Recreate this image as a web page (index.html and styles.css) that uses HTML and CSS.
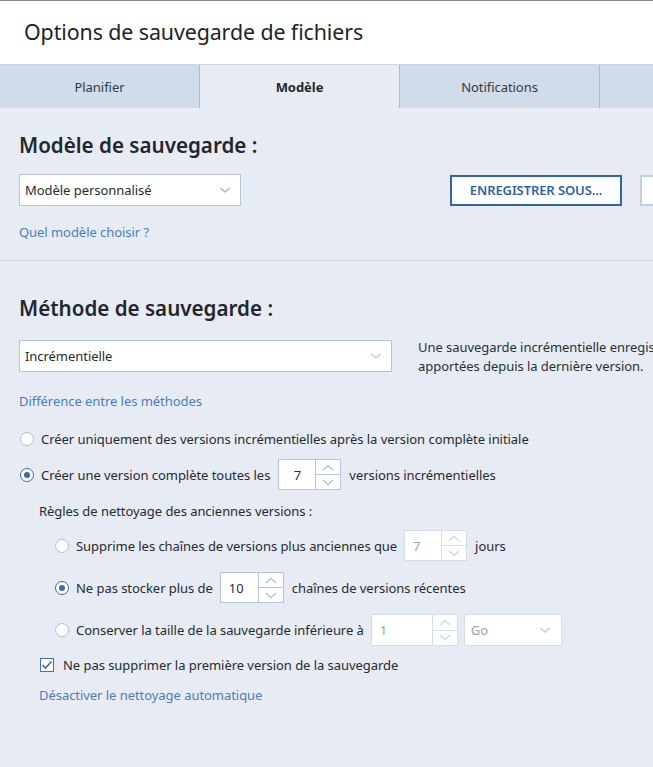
FILE: index.html
```html
<!DOCTYPE html>
<html lang="fr">
<head>
<meta charset="utf-8">
<title>Options de sauvegarde de fichiers</title>
<link rel="stylesheet" href="styles.css">
</head>
<body>
<div class="page">
  <header class="header">
    <h1 class="title">Options de sauvegarde de fichiers</h1>
  </header>
  <nav class="tabs">
    <div class="tab">Planifier</div>
    <div class="tab active">Modèle</div>
    <div class="tab">Notifications</div>
    <div class="tab"></div>
  </nav>
  <main class="content">
    <section class="sec sec-model">
      <h2 class="heading">Modèle de sauvegarde :</h2>
      <div class="row model-row">
        <div class="select select-model">
          <span>Modèle personnalisé</span>
          <svg class="chev" width="12" height="8" viewBox="0 0 12 8"><polyline points="1.5,2 6,6 10.5,2" fill="none" stroke="#aab6c6" stroke-width="1.4"/></svg>
        </div>
        <button class="btn btn-primary">ENREGISTRER SOUS...</button>
        <button class="btn btn-ghost"></button>
      </div>
      <a class="link link-model">Quel modèle choisir ?</a>
    </section>
    <div class="divider"></div>
    <section class="sec sec-method">
      <h2 class="heading heading-method">Méthode de sauvegarde :</h2>
      <div class="row method-row">
        <div class="select select-method">
          <span>Incrémentielle</span>
          <svg class="chev" width="12" height="8" viewBox="0 0 12 8"><polyline points="1.5,2 6,6 10.5,2" fill="none" stroke="#c3ccd8" stroke-width="1.3"/></svg>
        </div>
        <p class="desc"><span class="desc-line">Une sauvegarde incrémentielle enregistre uniquement les modifications</span><span class="desc-line">apportées depuis la dernière version.</span></p>
      </div>
      <a class="link link-diff">Différence entre les méthodes</a>

      <label class="opt opt-1">
        <span class="radio"></span>
        <span>Créer uniquement des versions incrémentielles après la version complète initiale</span>
      </label>
      <div class="opt opt-2">
        <span class="radio checked"></span>
        <span>Créer une version complète toutes les</span>
        <div class="spin spin-a">
          <span class="spin-val center">7</span>
          <span class="spin-arrows">
            <span class="arr"><svg width="12" height="7" viewBox="0 0 12 7"><polyline points="1,6 6,1.5 11,6" fill="none" stroke="#b9c3d1" stroke-width="1.4"/></svg></span>
            <span class="arr"><svg width="12" height="7" viewBox="0 0 12 7"><polyline points="1,1 6,5.5 11,1" fill="none" stroke="#b9c3d1" stroke-width="1.4"/></svg></span>
          </span>
        </div>
        <span>versions incrémentielles</span>
      </div>

      <div class="rules">
        <p class="rules-title">Règles de nettoyage des anciennes versions :</p>
        <div class="opt sub sub-1">
          <span class="radio"></span>
          <span>Supprime les chaînes de versions plus anciennes que</span>
          <div class="spin spin-b disabled">
            <span class="spin-val">7</span>
            <span class="spin-arrows">
              <span class="arr"><svg width="12" height="7" viewBox="0 0 12 7"><polyline points="1,6 6,1.5 11,6" fill="none" stroke="#d2d8e1" stroke-width="1.4"/></svg></span>
              <span class="arr"><svg width="12" height="7" viewBox="0 0 12 7"><polyline points="1,1 6,5.5 11,1" fill="none" stroke="#d2d8e1" stroke-width="1.4"/></svg></span>
            </span>
          </div>
          <span>jours</span>
        </div>
        <div class="opt sub sub-2">
          <span class="radio checked"></span>
          <span>Ne pas stocker plus de</span>
          <div class="spin spin-c">
            <span class="spin-val">10</span>
            <span class="spin-arrows">
              <span class="arr"><svg width="12" height="7" viewBox="0 0 12 7"><polyline points="1,6 6,1.5 11,6" fill="none" stroke="#b9c3d1" stroke-width="1.4"/></svg></span>
              <span class="arr"><svg width="12" height="7" viewBox="0 0 12 7"><polyline points="1,1 6,5.5 11,1" fill="none" stroke="#b9c3d1" stroke-width="1.4"/></svg></span>
            </span>
          </div>
          <span>chaînes de versions récentes</span>
        </div>
        <div class="opt sub sub-3">
          <span class="radio"></span>
          <span>Conserver la taille de la sauvegarde inférieure à</span>
          <div class="spin spin-d disabled">
            <span class="spin-val">1</span>
            <span class="spin-arrows">
              <span class="arr"><svg width="12" height="7" viewBox="0 0 12 7"><polyline points="1,6 6,1.5 11,6" fill="none" stroke="#d2d8e1" stroke-width="1.4"/></svg></span>
              <span class="arr"><svg width="12" height="7" viewBox="0 0 12 7"><polyline points="1,1 6,5.5 11,1" fill="none" stroke="#d2d8e1" stroke-width="1.4"/></svg></span>
            </span>
          </div>
          <div class="select select-unit disabled">
            <span>Go</span>
            <svg class="chev" width="12" height="8" viewBox="0 0 12 8"><polyline points="1.5,2 6,6 10.5,2" fill="none" stroke="#c3ccd8" stroke-width="1.4"/></svg>
          </div>
        </div>
        <div class="opt check-row">
          <span class="checkbox"><svg width="12" height="10" viewBox="0 0 12 10"><polyline points="1.5,5 4.5,8 10.5,1.5" fill="none" stroke="#3c6aac" stroke-width="1.6"/></svg></span>
          <span>Ne pas supprimer la première version de la sauvegarde</span>
        </div>
        <a class="link link-disable">Désactiver le nettoyage automatique</a>
      </div>
    </section>
  </main>
</div>
</body>
</html>
```
FILE: styles.css
```css
* { box-sizing: border-box; }
html, body { margin: 0; padding: 0; }
body {
  width: 653px;
  height: 767px;
  overflow: hidden;
  font-family: "Noto Sans", "Open Sans", sans-serif;
  font-size: 13px;
  letter-spacing: -0.05px;
  color: #262a30;
  background: #e7ecf4;
}
.page { width: 653px; height: 767px; display: flex; flex-direction: column; overflow: hidden; }

.header {
  background: #ffffff;
  border-top: 1px solid #8c8c8c;
  height: 64px;
  flex: 0 0 64px;
  display: flex;
  align-items: center;
  padding-left: 24px;
}
.title {
  margin: 0;
  font-size: 21.4px;
  font-weight: 400;
  color: #1f2328;
  letter-spacing: -0.1px;
  padding-bottom: 2px;
}

.tabs {
  display: flex;
  height: 44px;
  flex: 0 0 44px;
  background: #d0dcea;
  border-top: 1px solid #c6d4e6;
}
.tab {
  flex: 0 0 200px;
  border-right: 1px solid #a9bcd4;
  display: flex;
  align-items: center;
  justify-content: center;
  color: #333a44;
  font-size: 13px;
}
.tab.active { background: #e7ecf4; font-weight: 700; color: #23272d; }
.tab:last-child { border-right: none; flex: 1 0 53px; }

.content { flex: 1; background: #e7ecf4; overflow: hidden; }
.sec { padding-left: 19px; }
.heading {
  margin: 0;
  font-size: 20.6px;
  line-height: 28px;
  font-weight: 600;
  color: #23272d;
  letter-spacing: 0;
}
.sec-model { padding-top: 23px; padding-bottom: 18px; }
.row { display: flex; align-items: center; overflow: hidden; }
.model-row { margin-top: 15px; height: 32px; }

.select {
  height: 32px;
  flex-shrink: 0;
  background: #fff;
  border: 1px solid #b3c6de;
  display: flex;
  align-items: center;
  justify-content: space-between;
  padding: 0 9px 0 5px;
  font-size: 13px;
}
.select-model { width: 222px; }
.select-method { width: 373px; }
.select-unit { width: 98px; margin-left: 6px; color: #9aa3ae; border-color: #d4dde9; padding-left: 6px; padding-right: 10px; }

.btn {
  font-family: inherit;
  height: 31px;
  background: #fff;
  cursor: pointer;
  flex-shrink: 0;
}
.btn-primary {
  margin-left: 209px;
  width: 172px;
  border: 2px solid #2f66aa;
  color: #2d63a6;
  font-size: 13px;
  font-weight: 600;
  letter-spacing: -0.1px;
  padding: 0;
}
.btn-ghost {
  margin-left: 18px;
  width: 40px;
  border: 2px solid #bcd0e6;
}

.link {
  display: block;
  color: #4b7cc1;
  font-size: 13px;
  line-height: 20px;
  cursor: pointer;
}
.link-model { margin-top: 16px; }

.divider { height: 1px; background: #cfdbea; }

.sec-method { padding-top: 33px; }
.method-row { margin-top: 18px; height: 40px; margin-bottom: -8px; align-items: flex-start; }
.desc {
  margin: -2px 0 0 26px;
  font-size: 13px;
  line-height: 19px;
  white-space: nowrap;
  color: #2a2f36;
  flex-shrink: 0;
}
.desc-line { display: block; }
.link-diff { margin-top: 19px; }

.opt {
  display: flex;
  align-items: center;
  white-space: nowrap;
  font-size: 13px;
}
.opt-1 { margin-top: 18px; height: 20px; margin-left: 1px; }
.opt-2 { margin-top: 10px; height: 31px; margin-left: 1px; }
.radio {
  width: 14px;
  height: 14px;
  flex: 0 0 14px;
  border-radius: 50%;
  border: 1px solid #b2c0d4;
  background: #fff;
  margin-right: 7px;
  position: relative;
}
.radio.checked { border-color: #3d68a6; }
.radio.checked::after {
  content: "";
  position: absolute;
  left: 3px; top: 3px;
  width: 6px; height: 6px;
  border-radius: 50%;
  background: #3d68a6;
}

.spin {
  display: flex;
  height: 31px;
  border: 1px solid #b3c6de;
  background: #fff;
  margin: 0 8px 0 7px;
}
.spin-val {
  display: flex;
  align-items: center;
  padding-left: 8px;
  font-size: 13px;
  color: #2a2f36;
}
.spin-val.center { justify-content: center; padding-left: 0; }
.spin-arrows {
  width: 25px;
  border-left: 1px solid #b3c6de;
  display: flex;
  flex-direction: column;
}
.arr {
  flex: 1;
  display: flex;
  align-items: center;
  justify-content: center;
}
.arr + .arr { border-top: 1px solid #b3c6de; }
.spin.disabled { border-color: #d4dde9; }
.spin.disabled .spin-val { color: #9aa3ae; }
.spin.disabled .spin-arrows, .spin.disabled .arr + .arr { border-color: #d4dde9; }
.spin-a .spin-val { width: 36px; }
.spin-b .spin-val { width: 36px; }
.spin-c .spin-val { width: 37px; }
.spin-d .spin-val { width: 60px; }
.spin-a { margin-left: 8px; }

.rules { padding-left: 20px; }
.rules-title { margin: 11px 0 0 0; line-height: 20px; }
.sub { margin-left: 16px; }
.sub-1 { margin-top: 9px; height: 31px; }
.sub-2 { margin-top: 11px; height: 31px; }
.sub-3 { margin-top: 11px; height: 32px; }
.sub-3 .spin { height: 32px; margin-right: 0; }
.sub-3 .select { height: 32px; }

.check-row { margin-top: 9px; height: 20px; margin-left: 1px; }
.checkbox {
  width: 14px;
  height: 14px;
  flex: 0 0 14px;
  border: 1px solid #4670ad;
  background: #fff;
  margin-right: 9px;
  display: flex;
  align-items: center;
  justify-content: center;
}
.link-disable { margin-top: 10px; }
```
